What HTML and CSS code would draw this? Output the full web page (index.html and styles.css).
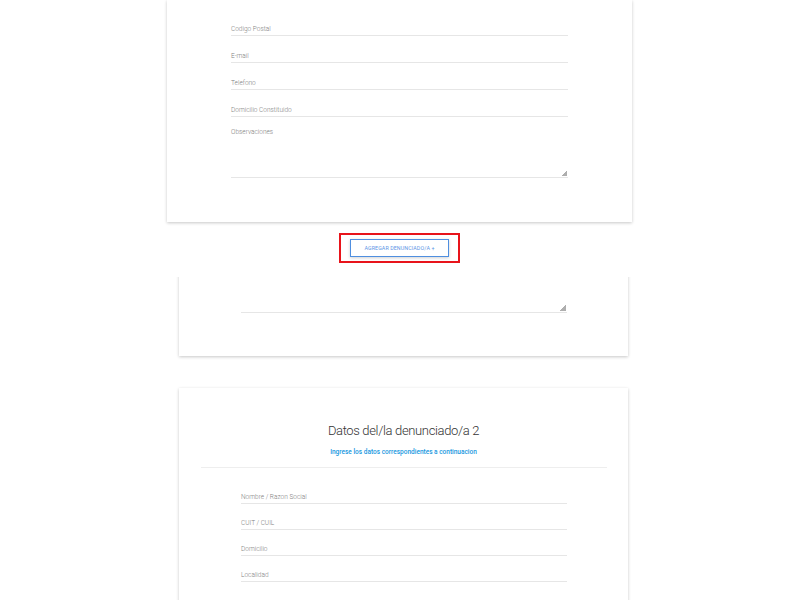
FILE: index.html
```html
<!DOCTYPE html>
<html lang="es">
<head>
<meta charset="utf-8">
<title>Denuncia</title>
<link rel="stylesheet" href="styles.css">
</head>
<body>
<div class="card card-wide">
  <div class="field"><label class="field-label">Codigo Postal</label></div>
  <div class="field"><label class="field-label">E-mail</label></div>
  <div class="field"><label class="field-label">Telefono</label></div>
  <div class="field"><label class="field-label">Domicilio Constituido</label></div>
  <div class="area-field">
    <label class="area-label">Observaciones</label>
    <div class="area-wrap">
      <textarea class="area"></textarea>
      <span class="grip"></span>
    </div>
  </div>
</div>

<div class="button-row">
  <div class="highlight">
    <button class="add-btn" type="button">AGREGAR DENUNCIADO/A +</button>
  </div>
</div>

<div class="lower">
  <div class="card card-narrow card-clipped">
    <div class="area-wrap">
      <textarea class="area area-short"></textarea>
      <span class="grip"></span>
    </div>
  </div>

  <div class="card card-narrow card-section">
    <h2 class="section-title">Datos del/la denunciado/a 2</h2>
    <p class="section-sub">Ingrese los datos correspondientes a continuacion</p>
    <hr class="divider">
    <div class="fields-tight">
      <div class="field field-tight"><label class="field-label">Nombre / Razon Social</label></div>
      <div class="field field-tight"><label class="field-label">CUIT / CUIL</label></div>
      <div class="field field-tight"><label class="field-label">Domicilio</label></div>
      <div class="field field-tight"><label class="field-label">Localidad</label></div>
    </div>
  </div>
</div>
</body>
</html>
```

FILE: styles.css
```css
* { box-sizing: border-box; }

html, body {
  margin: 0;
  padding: 0;
  background: #ffffff;
  height: 600px;
  overflow: hidden;
}

body {
  font-family: Roboto, "Liberation Sans", sans-serif;
  color: #333;
}

.card {
  background: #fff;
  box-shadow: 0 1px 3px rgba(0, 0, 0, 0.22);
}

.card-wide {
  width: 465px;
  margin-left: 167px;
  padding: 9px 64px 44px 64px;
}

.field {
  padding-top: 15px;
}

.field-label {
  display: block;
  font-size: 6.5px;
  line-height: 10px;
  font-weight: 300;
  color: #808080;
  padding-bottom: 1px;
  border-bottom: 1px solid #e6e6e6;
}

.area-field {
  margin-top: 10px;
}

.area-label {
  display: block;
  font-size: 6.5px;
  line-height: 10px;
  font-weight: 300;
  color: #808080;
}

.area-wrap {
  position: relative;
}

.area {
  display: block;
  width: 100%;
  height: 41px;
  margin: 0;
  padding: 0;
  border: none;
  border-bottom: 1px solid #e6e6e6;
  background: transparent;
  resize: none;
  outline: none;
  font-family: inherit;
}

.grip {
  position: absolute;
  right: 1px;
  bottom: 2px;
  width: 6px;
  height: 6px;
  background: linear-gradient(to bottom right, transparent 50%, #9a9a9a 50%);
  opacity: 0.8;
}

.button-row {
  padding: 11px 0 14px 339px;
}

.highlight {
  display: inline-block;
  border: 2px solid #e8141b;
  padding: 4px 9px;
  line-height: 0;
}

.add-btn {
  width: 99px;
  height: 18px;
  margin: 0;
  padding: 0;
  background: #fff;
  border: 1px solid #4f8fe0;
  box-shadow: 0 1px 3px rgba(0, 0, 0, 0.18);
  color: #5b95e6;
  font-family: Roboto, "Liberation Sans", sans-serif;
  font-size: 5.3px;
  letter-spacing: 0.1px;
  line-height: 16px;
  text-align: center;
}

.lower {
  overflow: hidden;
}

.card-narrow {
  width: 449px;
  margin-left: 179px;
  padding-left: 62px;
  padding-right: 61px;
}

.card-clipped {
  margin-top: -20px;
  padding-top: 20px;
  padding-bottom: 43px;
}

.area-short {
  height: 36px;
}

.card-section {
  margin-top: 32px;
  padding: 33px 0 40px 0;
}

.section-title {
  margin: 0;
  font-size: 13px;
  letter-spacing: -0.35px;
  line-height: 20px;
  font-weight: 300;
  color: #333;
  text-align: center;
}

.section-sub {
  margin: 6px 0 0 0;
  font-size: 6.5px;
  line-height: 10px;
  font-weight: 500;
  color: #1797e0;
  text-align: center;
}

.divider {
  margin: 10px 21px 0 22px;
  border: none;
  border-top: 1px solid #eeeeee;
  height: 0;
}

.fields-tight {
  padding: 10px 61px 0 62px;
}

.field-tight {
  padding-top: 14px;
}
```
